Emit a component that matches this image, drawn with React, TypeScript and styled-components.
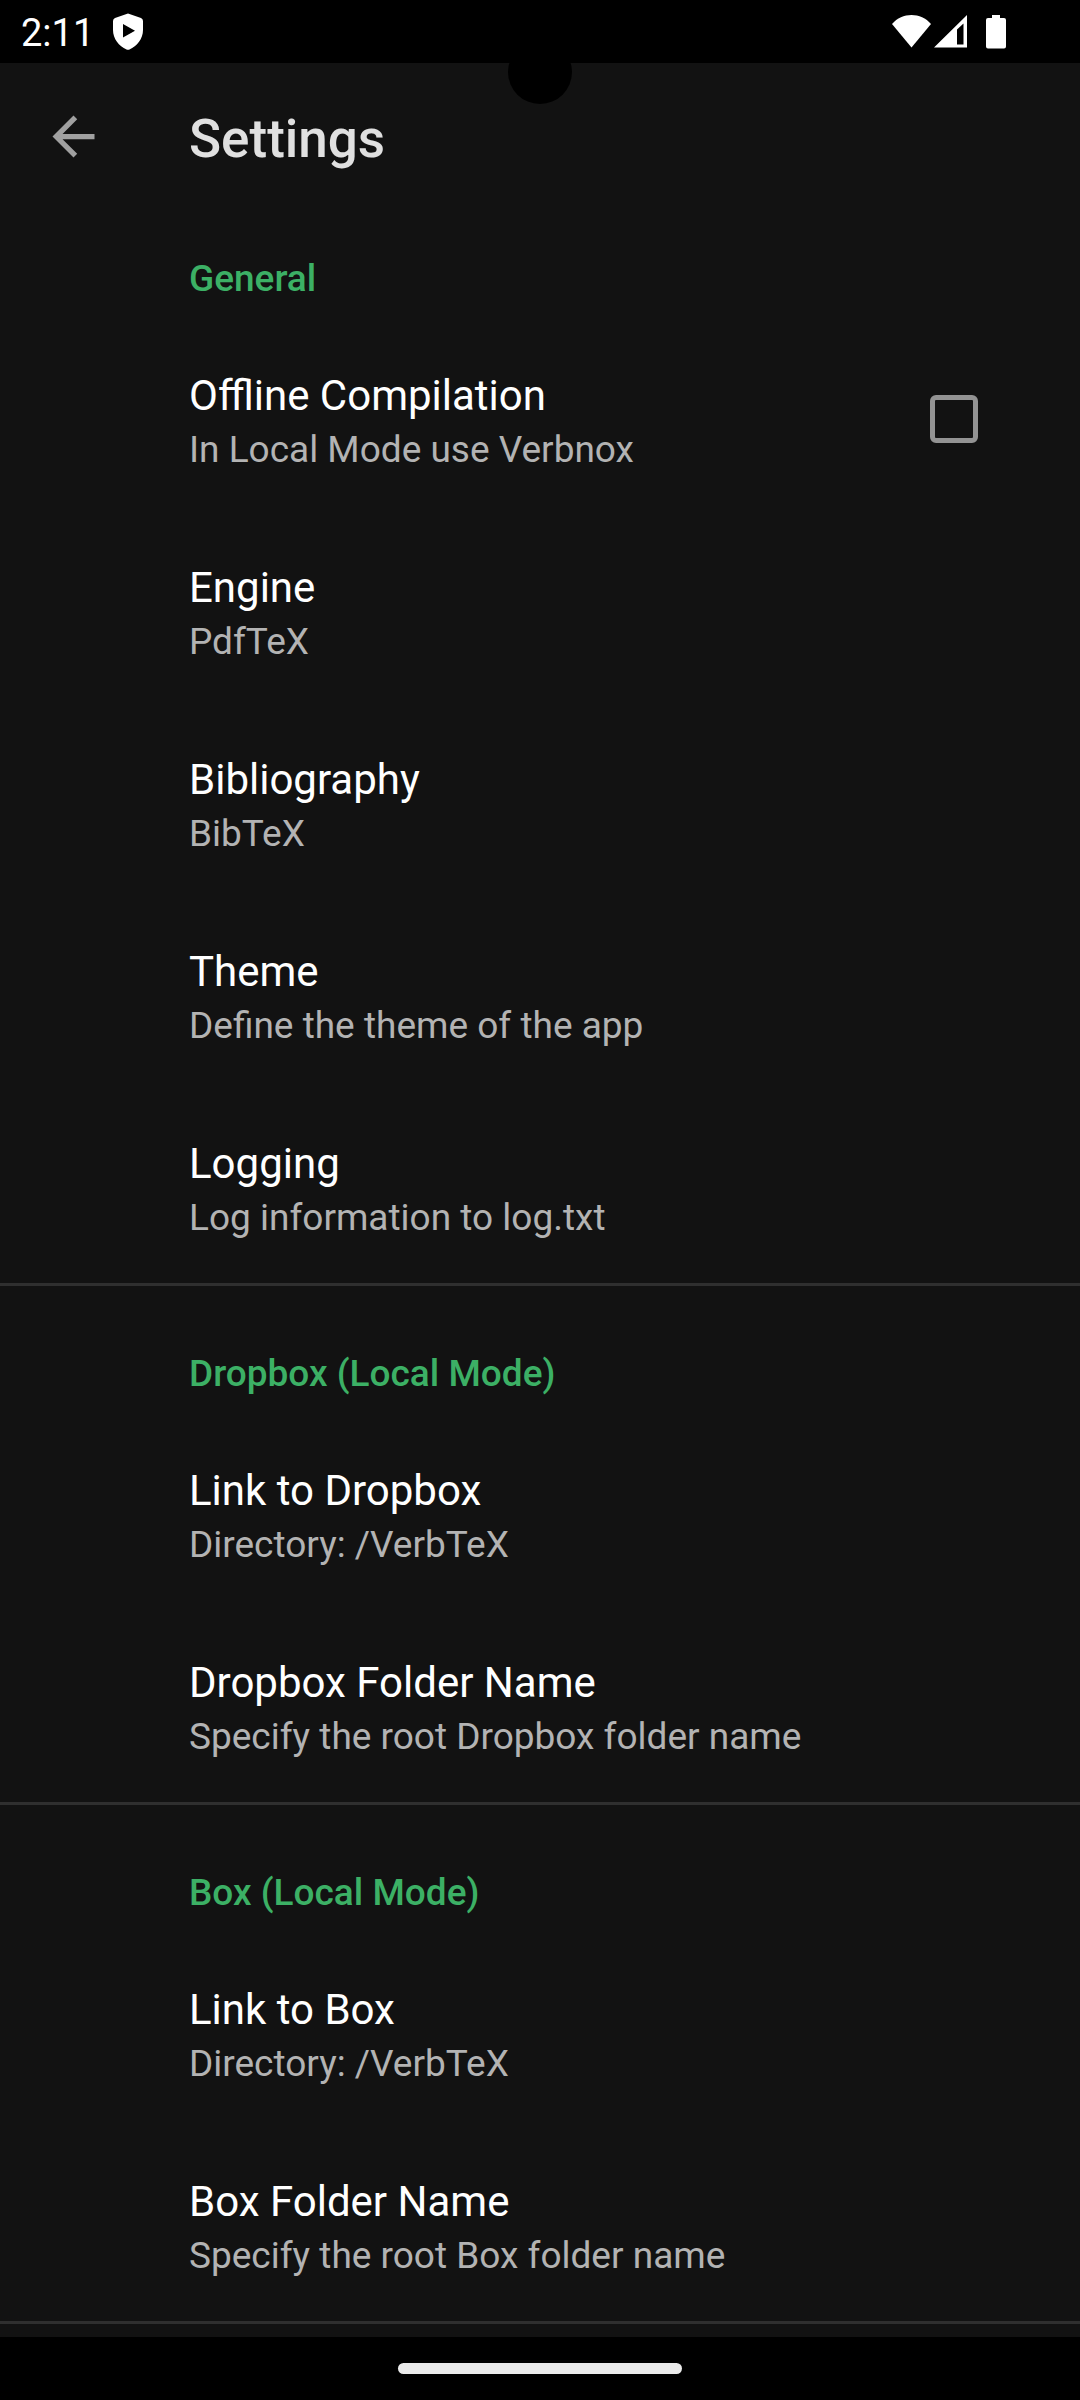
import React, { useState } from "react";
import styled, { createGlobalStyle } from "styled-components";

const GlobalStyle = createGlobalStyle`
  * { box-sizing: border-box; }
  body { margin: 0; background: #121212; font-family: Roboto, "Noto Sans", sans-serif; }
`;

const Screen = styled.div`
  position: relative;
  display: flex;
  flex-direction: column;
  min-height: 100vh;
  background: #121212;
  color: #ffffff;
`;

const StatusBar = styled.div`
  display: flex;
  align-items: center;
  justify-content: space-between;
  height: 63px;
  padding: 0 74px 0 21px;
  background: #000000;
`;

const StatusGroup = styled.div<{ $gap: number }>`
  display: flex;
  align-items: center;
  gap: ${(p) => p.$gap}px;
`;

const Clock = styled.span`
  padding-top: 2px;
  font-size: 38px;
  line-height: 44px;
`;

const Camera = styled.div`
  position: absolute;
  top: 40px;
  left: 50%;
  width: 64px;
  height: 64px;
  margin-left: -32px;
  border-radius: 50%;
  background: #000000;
`;

const Toolbar = styled.header`
  display: flex;
  align-items: center;
  height: 147px;
`;

const BackButton = styled.button`
  display: flex;
  align-items: center;
  justify-content: center;
  width: 147px;
  height: 147px;
  margin-right: 42px;
  padding: 0;
  border: 0;
  background: none;
`;

const PageTitle = styled.h1`
  margin: 0;
  padding-top: 4px;
  font-size: 53px;
  font-weight: 500;
  line-height: 64px;
  color: #e0e0e0;
`;

const Main = styled.main`
  flex: 1;
`;

const Section = styled.section`
  & + & {
    padding-top: 19px;
  }
  border-bottom: 3px solid #2f2f2f;
`;

const SectionTitle = styled.h2`
  margin: 0;
  padding: 43px 42px 18px 189px;
  font-size: 37px;
  font-weight: 500;
  line-height: 52px;
  color: #3cb065;
`;

const rowLayout = `
  display: flex;
  align-items: center;
  justify-content: space-between;
  width: 100%;
  min-height: 192px;
  padding: 0 102px 0 189px;
`;

const RowButton = styled.button`
  ${rowLayout}
  border: 0;
  background: none;
  color: inherit;
  font: inherit;
  text-align: left;
`;

const RowLabel = styled.label`
  ${rowLayout}
`;

const RowText = styled.span`
  display: flex;
  flex-direction: column;
  padding-top: 6px;
`;

const RowTitle = styled.span`
  font-size: 42px;
  line-height: 56px;
  color: #ffffff;
`;

const RowSummary = styled.span`
  font-size: 37px;
  line-height: 52px;
  color: #b3b3b3;
`;

const CheckBox = styled.input`
  appearance: none;
  width: 48px;
  height: 48px;
  margin: 0;
  border: 5px solid #939393;
  border-radius: 6px;
  &:checked {
    background: #3cb065;
    border-color: #3cb065;
  }
`;

const NavBar = styled.footer`
  display: flex;
  align-items: center;
  justify-content: center;
  height: 63px;
  background: #000000;
`;

const HomePill = styled.div`
  width: 284px;
  height: 11px;
  border-radius: 6px;
  background: #ebebeb;
`;

interface Item {
  title: string;
  summary: string;
  checkable?: boolean;
}

const sections: { name: string; items: Item[] }[] = [
  {
    name: "General",
    items: [
      { title: "Offline Compilation", summary: "In Local Mode use Verbnox", checkable: true },
      { title: "Engine", summary: "PdfTeX" },
      { title: "Bibliography", summary: "BibTeX" },
      { title: "Theme", summary: "Define the theme of the app" },
      { title: "Logging", summary: "Log information to log.txt" },
    ],
  },
  {
    name: "Dropbox (Local Mode)",
    items: [
      { title: "Link to Dropbox", summary: "Directory: /VerbTeX" },
      { title: "Dropbox Folder Name", summary: "Specify the root Dropbox folder name" },
    ],
  },
  {
    name: "Box (Local Mode)",
    items: [
      { title: "Link to Box", summary: "Directory: /VerbTeX" },
      { title: "Box Folder Name", summary: "Specify the root Box folder name" },
    ],
  },
];

function Preference({ title, summary, checkable }: Item) {
  const [checked, setChecked] = useState(false);
  const text = (
    <RowText>
      <RowTitle>{title}</RowTitle>
      <RowSummary>{summary}</RowSummary>
    </RowText>
  );
  if (checkable) {
    return (
      <RowLabel>
        {text}
        <CheckBox type="checkbox" checked={checked} onChange={(e) => setChecked(e.target.checked)} />
      </RowLabel>
    );
  }
  return <RowButton type="button">{text}</RowButton>;
}

function ShieldIcon() {
  return (
    <svg width="30" height="37" viewBox="0 0 30 37" aria-hidden="true">
      <path
        fill="#fff"
        fillRule="evenodd"
        d="M15 0.5 L28 5 Q30 6 30 8 V17 C30 26 24 33 16.500 36.500 Q15 37 13.500 36.500 C6 33 0 26 0 17 V8 Q0 6 2 5 Z M10 11 V24.500 L22 17.700 Z"
      />
    </svg>
  );
}

function SystemIcons() {
  return (
    <svg width="114" height="36" viewBox="0 0 114 36" aria-hidden="true">
      <path fill="#fff" d="M0 10 C10 -2 29 -2 39 10 L19.500 33.500 Z" />
      <path fill="#fff" fillRule="evenodd" d="M42 33.500 L75 1 V33.500 Z M65 15.500 V30.500 H71.500 V9.500 Z" />
      <path
        fill="#fff"
        d="M100 1 H108 V4 H112 Q114 4 114 6 V32.500 Q114 34.500 112 34.500 H96 Q94 34.500 94 32.500 V6 Q94 4 96 4 H100 Z"
      />
    </svg>
  );
}

export default function App() {
  return (
    <Screen>
      <GlobalStyle />
      <StatusBar>
        <StatusGroup $gap={19}>
          <Clock>2:11</Clock>
          <ShieldIcon />
        </StatusGroup>
        <SystemIcons />
      </StatusBar>
      <Camera />
      <Toolbar>
        <BackButton type="button" aria-label="Back">
          <svg width="63" height="63" viewBox="0 0 24 24" aria-hidden="true">
            <path fill="#a0a0a0" d="M20 11H7.830l5.590-5.590L12 4l-8 8 8 8 1.410-1.410L7.830 13H20v-2z" />
          </svg>
        </BackButton>
        <PageTitle>Settings</PageTitle>
      </Toolbar>
      <Main>
        {sections.map((section) => (
          <Section key={section.name}>
            <SectionTitle>{section.name}</SectionTitle>
            {section.items.map((item) => (
              <Preference key={item.title} {...item} />
            ))}
          </Section>
        ))}
      </Main>
      <NavBar>
        <HomePill />
      </NavBar>
    </Screen>
  );
}
